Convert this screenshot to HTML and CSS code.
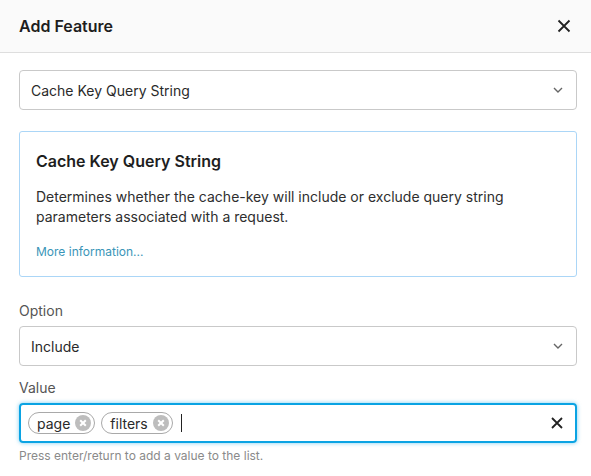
FILE: index.html
```html
<!DOCTYPE html>
<html>
<head>
<meta charset="utf-8">
<link rel="stylesheet" href="styles.css">
</head>
<body>
<div class="modal">
  <div class="header">
    <h1 class="title">Add Feature</h1>
    <svg class="close" width="14" height="14" viewBox="0 0 14 14"><path d="M1.5 1.5L12.5 12.5M12.5 1.5L1.5 12.5" stroke="#222" stroke-width="1.8" fill="none"/></svg>
  </div>
  <div class="body">
    <div class="select">
      <span>Cache Key Query String</span>
      <svg class="chev" width="10" height="6" viewBox="0 0 10 6"><path d="M1 1L5 5L9 1" stroke="#666" stroke-width="1.4" fill="none"/></svg>
    </div>
    <div class="card">
      <h2 class="card-title">Cache Key Query String</h2>
      <p class="card-desc">Determines whether the cache-key will include or exclude query string parameters associated with a request.</p>
      <a class="more">More information...</a>
    </div>
    <div class="field">
      <label class="label">Option</label>
      <div class="select">
        <span>Include</span>
        <svg class="chev" width="10" height="6" viewBox="0 0 10 6"><path d="M1 1L5 5L9 1" stroke="#666" stroke-width="1.4" fill="none"/></svg>
      </div>
    </div>
    <div class="field">
      <label class="label">Value</label>
      <div class="tags">
        <span class="chip">page<svg class="chip-x" width="16" height="16" viewBox="0 0 16 16"><circle cx="8" cy="8" r="8" fill="#bdbdbd"/><path d="M5.2 5.2L10.8 10.8M10.8 5.2L5.2 10.8" stroke="#fff" stroke-width="2"/></svg></span>
        <span class="chip">filters<svg class="chip-x" width="16" height="16" viewBox="0 0 16 16"><circle cx="8" cy="8" r="8" fill="#bdbdbd"/><path d="M5.2 5.2L10.8 10.8M10.8 5.2L5.2 10.8" stroke="#fff" stroke-width="2"/></svg></span>
        <span class="cursor"></span>
        <svg class="clear" width="12" height="12" viewBox="0 0 12 12"><path d="M1 1L11 11M11 1L1 11" stroke="#222" stroke-width="1.8" fill="none"/></svg>
      </div>
      <p class="help">Press enter/return to add a value to the list.</p>
    </div>
  </div>
</div>
</body>
</html>
```
FILE: styles.css
```css
* { box-sizing: border-box; }
html, body { margin: 0; padding: 0; background: #fff; }
body { font-family: Inter, "Noto Sans", sans-serif; color: #222; }
.modal { width: 591px; height: 476px; overflow: hidden; }
.header {
  height: 53px;
  background: #fafafa;
  border-bottom: 1px solid #dedede;
  display: flex;
  align-items: center;
  justify-content: space-between;
  padding: 0 20px 0 19px;
}
.title { margin: 0; font-size: 16px; font-weight: 600; color: #1e1e1e; }
.close { display: block; }
.body { padding: 17px 14px 0 19px; }
.select {
  height: 40px;
  border: 1px solid #c9c9c9;
  border-radius: 4px;
  display: flex;
  align-items: center;
  justify-content: space-between;
  padding: 0 13px 0 11px;
  font-size: 14px;
  color: #2a2a2a;
  background: #fff;
}
.chev { display: block; }
.card {
  margin-top: 21px;
  height: 146px;
  border: 1px solid #abd6f7;
  border-radius: 3px;
  padding: 19px 16px 0 16px;
}
.card-title { margin: 0; font-size: 16px; font-weight: 600; line-height: 20px; color: #1e1e1e; }
.card-desc { margin: 16px 0 0; font-size: 14px; line-height: 20px; color: #2e2e2e; }
.more { display: block; margin-top: 17px; font-size: 12px; line-height: 16px; color: #3a95b8; }
.field { margin-top: 25px; }
.field + .field { margin-top: 13px; }
.label { display: block; font-size: 14px; line-height: 18px; color: #555; margin-bottom: 6px; }
.tags {
  height: 40px;
  border: 2px solid #0aa3e3;
  border-radius: 4px;
  box-shadow: 0 0 4px rgba(10, 163, 227, 0.55);
  display: flex;
  align-items: center;
  padding: 0 12px 0 7px;
  gap: 6px;
}
.chip {
  height: 22px;
  border: 1px solid #a9a9a9;
  border-radius: 11px;
  display: inline-flex;
  align-items: center;
  gap: 5px;
  padding: 0 3px 0 8px;
  font-size: 14px;
  color: #2a2a2a;
}
.chip-x { display: block; }
.cursor { width: 1px; height: 18px; background: #222; margin-left: 2px; }
.clear { margin-left: auto; display: block; }
.help { margin: 5px 0 0; font-size: 12px; line-height: 16px; color: #8a8a8a; }
```
